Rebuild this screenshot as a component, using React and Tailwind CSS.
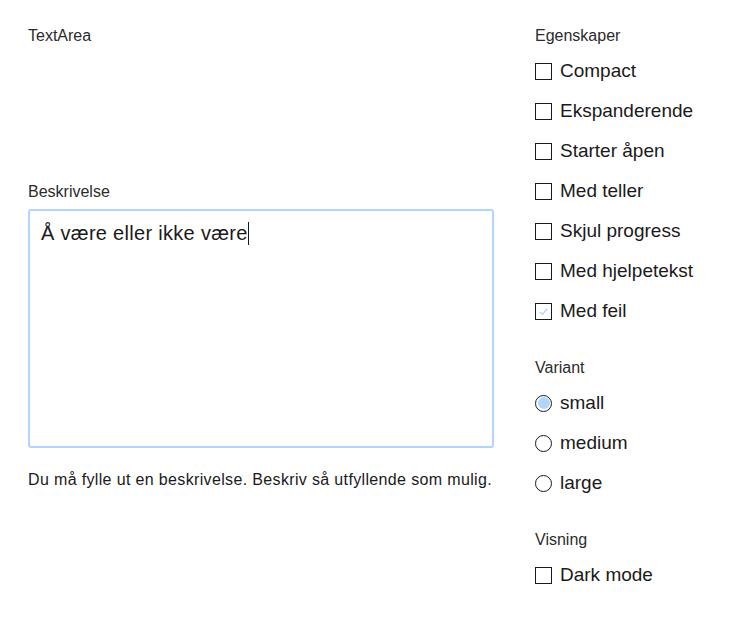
import React from "react";

const checks = [
  { label: "Compact", checked: false },
  { label: "Ekspanderende", checked: false },
  { label: "Starter åpen", checked: false },
  { label: "Med teller", checked: false },
  { label: "Skjul progress", checked: false },
  { label: "Med hjelpetekst", checked: false },
  { label: "Med feil", checked: true },
];

const variants = [
  { label: "small", checked: true },
  { label: "medium", checked: false },
  { label: "large", checked: false },
];

function CheckRow({ label, checked }) {
  return (
    <div className="flex items-center h-10">
      <span className="w-[17px] h-[17px] border-[1.5px] border-[#1a1a1a] flex items-center justify-center">
        {checked && (
          <svg width="11" height="11" viewBox="0 0 12 12" fill="none">
            <path d="M2 6.5 L5 9 L10 3" stroke="#b3d4fc" strokeWidth="1.5" />
          </svg>
        )}
      </span>
      <span className="ml-[8px] text-[19px] text-[#1a1a1a]">{label}</span>
    </div>
  );
}

function RadioRow({ label, checked }) {
  return (
    <div className="flex items-center h-10">
      <span className="w-[17px] h-[17px] rounded-full border-[1.5px] border-[#1a1a1a] flex items-center justify-center">
        {checked && <span className="w-[12px] h-[12px] rounded-full bg-[#b3d4fc]" />}
      </span>
      <span className="ml-[8px] text-[19px] text-[#1a1a1a]">{label}</span>
    </div>
  );
}

function SectionLabel({ children, className = "" }) {
  return <div className={"h-5 leading-5 text-[16px] text-[#2b2b2b] " + className}>{children}</div>;
}

export default function App() {
  return (
    <div
      className="flex bg-white w-[750px] h-[632px] pl-[28px] pt-[26px]"
      style={{ fontFamily: "'Liberation Sans', Arial, sans-serif" }}
    >
      {/* --- Venstre kolonne --- */}
      <div className="w-[466px] flex flex-col">
        <SectionLabel>TextArea</SectionLabel>
        <SectionLabel className="mt-[136px]">Beskrivelse</SectionLabel>
        <div className="mt-[7px] h-[239px] border-2 border-[#b3d4fc] rounded-[3px] px-[11px] pt-[10px]">
          <span className="text-[20px] tracking-[0.3px] text-[#1a1a1a] leading-[24px]">Å være eller ikke være</span>
          <span className="inline-block w-px h-[23px] bg-[#1a1a1a] align-[-5px]" />
        </div>
        <div className="mt-[22px] text-[16px] tracking-[0.35px] text-[#1a1a1a] leading-5 whitespace-nowrap">
          Du må fylle ut en beskrivelse. Beskriv så utfyllende som mulig.
        </div>
      </div>

      {/* --- Høyre kolonne --- */}
      <div className="ml-[41px] flex flex-col">
        <SectionLabel>Egenskaper</SectionLabel>
        <div className="mt-[5px]">
          {checks.map((c) => (
            <CheckRow key={c.label} {...c} />
          ))}
        </div>
        <SectionLabel className="mt-[27px]">Variant</SectionLabel>
        <div className="mt-[5px]">
          {variants.map((v) => (
            <RadioRow key={v.label} {...v} />
          ))}
        </div>
        <SectionLabel className="mt-[27px]">Visning</SectionLabel>
        <div className="mt-[5px]">
          <CheckRow label="Dark mode" checked={false} />
        </div>
      </div>
    </div>
  );
}
